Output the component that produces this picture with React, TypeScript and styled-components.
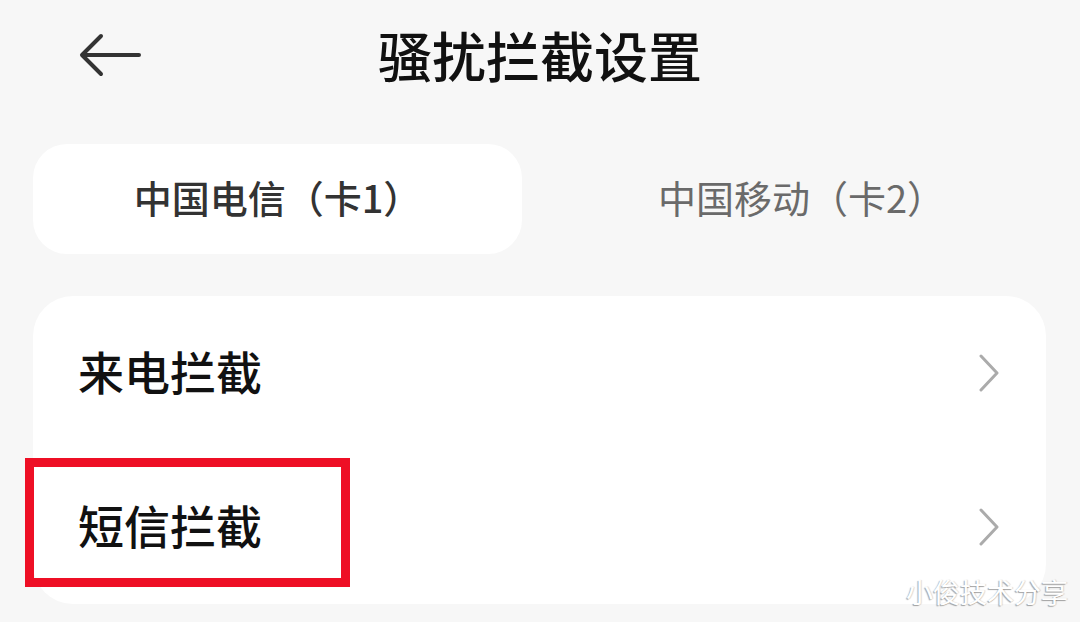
import React, { useState } from 'react';
import styled, { createGlobalStyle } from 'styled-components';

const GlobalStyle = createGlobalStyle`
  html, body {
    margin: 0;
    padding: 0;
    background: #f7f7f7;
  }
  body {
    font-family: "Noto Sans CJK SC", "Noto Sans", sans-serif;
    -webkit-font-smoothing: antialiased;
  }
`;

const Page = styled.div`
  position: relative;
  width: 1080px;
  height: 622px;
  overflow: hidden;
  background: #f7f7f7;
`;

const Header = styled.header`
  height: 114px;
  display: grid;
  grid-template-columns: 1fr auto 1fr;
  align-items: center;
  padding: 0 0 4px 79px;
  box-sizing: border-box;
`;

const BackButton = styled.button`
  justify-self: start;
  width: 62px;
  height: 44px;
  padding: 0;
  border: none;
  background: none;
  display: flex;
  align-items: center;
  color: #333;
  cursor: pointer;
`;

const Title = styled.h1`
  margin: 0 0 0 -79px;
  font-size: 54px;
  font-weight: 500;
  color: #111;
  line-height: 1;
  letter-spacing: 0;
`;

const Tabs = styled.div`
  display: grid;
  grid-template-columns: 1fr 1fr;
  gap: 35px;
  margin: 30px 34px 0 33px;
`;

const Tab = styled.button<{ $active?: boolean }>`
  height: 110px;
  border: none;
  border-radius: 34px;
  background: ${(p) => (p.$active ? '#ffffff' : 'transparent')};
  color: ${(p) => (p.$active ? '#333333' : '#6a6a6a')};
  font-family: inherit;
  font-size: 38px;
  font-weight: ${(p) => (p.$active ? 500 : 400)};
  padding: 0 0 6px;
  cursor: pointer;
`;

const Card = styled.section`
  margin: 42px 34px 0 33px;
  background: #ffffff;
  border-radius: 40px;
  display: flex;
  flex-direction: column;
`;

const Row = styled.div`
  position: relative;
  height: 154px;
  display: flex;
  align-items: center;
  justify-content: space-between;
  padding: 0 46px 0 45px;
`;

const RowLabel = styled.span`
  font-size: 46px;
  font-weight: 500;
  color: #111;
  line-height: 1;
  margin-top: -7px;
`;

const Highlight = styled.div`
  position: absolute;
  left: -8px;
  top: 8px;
  width: 325px;
  height: 129px;
  box-sizing: border-box;
  border: 9px solid #ee0f25;
  pointer-events: none;
`;

const Watermark = styled.div`
  position: absolute;
  right: 12px;
  top: 572px;
  font-size: 27px;
  color: #ffffff;
  letter-spacing: 0;
  text-shadow: -1px 1px 1px rgba(0, 0, 0, 0.35), 1px 0 1px rgba(0, 0, 0, 0.15);
`;

const ArrowLeft = () => (
  <svg width="62" height="44" viewBox="0 0 62 44" fill="none">
    <path
      d="M60 22H4M22 3L3 22L22 41"
      stroke="currentColor"
      strokeWidth="4"
      strokeLinecap="round"
      strokeLinejoin="round"
    />
  </svg>
);

const Chevron = () => (
  <svg width="22" height="38" viewBox="0 0 22 38" fill="none">
    <path
      d="M3 2L19 19L3 36"
      stroke="#ababab"
      strokeWidth="3"
      strokeLinecap="round"
      strokeLinejoin="round"
    />
  </svg>
);

export default function App() {
  const [card, setCard] = useState(0);

  return (
    <Page>
      <GlobalStyle />
      <Header>
        <BackButton aria-label="返回">
          <ArrowLeft />
        </BackButton>
        <Title>骚扰拦截设置</Title>
        <span />
      </Header>

      <Tabs>
        <Tab $active={card === 0} onClick={() => setCard(0)}>中国电信（卡1）</Tab>
        <Tab $active={card === 1} onClick={() => setCard(1)}>中国移动（卡2）</Tab>
      </Tabs>

      <Card>
        <Row>
          <RowLabel>来电拦截</RowLabel>
          <Chevron />
        </Row>
        <Row>
          <Highlight />
          <RowLabel>短信拦截</RowLabel>
          <Chevron />
        </Row>
      </Card>

      <Watermark>小俊技术分享</Watermark>
    </Page>
  );
}
